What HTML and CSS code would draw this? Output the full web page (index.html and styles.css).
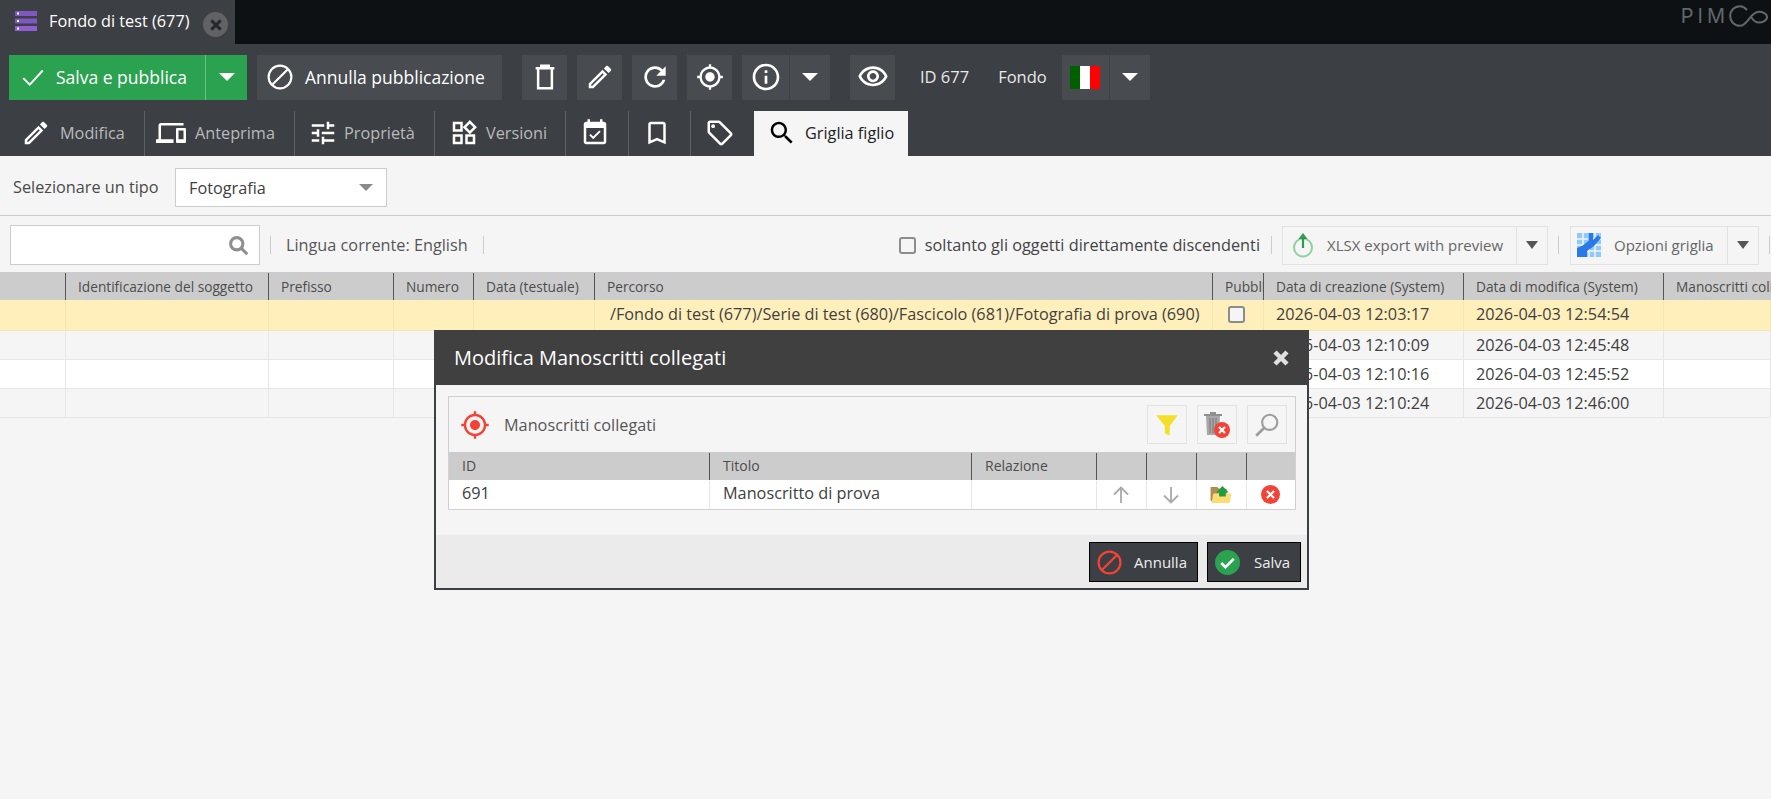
FILE: index.html
```html
<!DOCTYPE html>
<html lang="it">
<head>
<meta charset="utf-8">
<title>Fondo di test (677)</title>
<link rel="stylesheet" href="styles.css">
</head>
<body>
<svg class="sprite" xmlns="http://www.w3.org/2000/svg">
  <symbol id="i-edit" viewBox="0 0 24 24"><path d="M3 17.25V21h3.75L17.81 9.94l-3.75-3.75L3 17.25zM5.92 19H5v-.92l9.06-9.06.92.92L5.92 19zM20.71 5.63l-2.34-2.34c-.2-.2-.45-.29-.71-.29s-.51.1-.7.29l-1.83 1.83 3.75 3.75 1.83-1.83c.39-.39.39-1.02 0-1.41z"/></symbol>
  <symbol id="i-refresh" viewBox="0 0 24 24"><path d="M17.65 6.35C16.2 4.9 14.21 4 12 4c-4.42 0-7.99 3.58-7.99 8s3.57 8 7.99 8c3.73 0 6.84-2.55 7.73-6h-2.08c-.82 2.33-3.04 4-5.65 4-3.31 0-6-2.69-6-6s2.69-6 6-6c1.66 0 3.14.69 4.22 1.78L13 11h7V4l-2.35 2.35z"/></symbol>
  <symbol id="i-target" viewBox="0 0 24 24"><path d="M12 8c-2.21 0-4 1.79-4 4s1.79 4 4 4 4-1.79 4-4-1.79-4-4-4zm8.94 3c-.46-4.17-3.77-7.48-7.94-7.94V1h-2v2.06C6.83 3.52 3.52 6.83 3.06 11H1v2h2.06c.46 4.17 3.77 7.48 7.94 7.94V23h2v-2.06c4.17-.46 7.48-3.77 7.94-7.94H23v-2h-2.06zM12 19c-3.87 0-7-3.13-7-7s3.13-7 7-7 7 3.13 7 7-3.13 7-7 7z"/></symbol>
  <symbol id="i-info" viewBox="0 0 24 24"><path d="M11 7h2v2h-2zm0 4h2v6h-2zm1-9C6.48 2 2 6.48 2 12s4.48 10 10 10 10-4.48 10-10S17.52 2 12 2zm0 18c-4.41 0-8-3.59-8-8s3.59-8 8-8 8 3.59 8 8-3.59 8-8 8z"/></symbol>
  <symbol id="i-eye" viewBox="0 0 24 24"><path d="M12 6c3.79 0 7.17 2.13 8.82 5.5C19.17 14.87 15.79 17 12 17s-7.17-2.13-8.82-5.5C4.83 8.13 8.21 6 12 6m0-2C7 4 2.73 7.11 1 11.5 2.73 15.89 7 19 12 19s9.27-3.11 11-7.5C21.27 7.11 17 4 12 4zm0 5c1.38 0 2.5 1.12 2.5 2.5S13.38 14 12 14s-2.5-1.12-2.5-2.5S10.62 9 12 9m0-2c-2.48 0-4.5 2.02-4.5 4.5S9.52 16 12 16s4.5-2.02 4.5-4.5S14.48 7 12 7z"/></symbol>
  <symbol id="i-devices" viewBox="0 0 24 24"><path d="M4 6h18V4H4c-1.1 0-2 .9-2 2v11H0v3h14v-3H4V6zm19 2h-6c-.55 0-1 .45-1 1v10c0 .55.45 1 1 1h6c.55 0 1-.45 1-1V9c0-.55-.45-1-1-1zm-1 9h-4v-7h4v7z"/></symbol>
  <symbol id="i-tune" viewBox="0 0 24 24"><path d="M3 17v2h6v-2H3zM3 5v2h10V5H3zm10 16v-2h8v-2h-8v-2h-2v6h2zM7 9v2H3v2h4v2h2V9H7zm14 4v-2H11v2h10zm-6-4h2V7h4V5h-4V3h-2v6z"/></symbol>
  <symbol id="i-widgets" viewBox="0 0 24 24"><path d="M16.66 4.52l2.83 2.83-2.83 2.83-2.83-2.83 2.83-2.83M9 5v4H5V5h4m10 10v4h-4v-4h4M9 15v4H5v-4h4m7.66-13.31L11 7.34 16.66 13l5.66-5.66-5.66-5.65zM11 3H3v8h8V3zm10 10h-8v8h8v-8zm-10 0H3v8h8v-8z"/></symbol>
  <symbol id="i-event" viewBox="0 0 24 24"><path d="M16.53 11.06L15.47 10l-4.88 4.88-2.12-2.12-1.06 1.06L10.59 17l5.94-5.94zM19 3h-1V1h-2v2H8V1H6v2H5c-1.11 0-1.99.9-1.99 2L3 19c0 1.1.89 2 2 2h14c1.1 0 2-.9 2-2V5c0-1.1-.9-2-2-2zm0 16H5V8h14v11z"/></symbol>
  <symbol id="i-bookmark" viewBox="0 0 24 24"><path d="M17 3H7c-1.1 0-1.99.9-1.99 2L5 21l7-3 7 3V5c0-1.1-.9-2-2-2zm0 15l-5-2.18L7 18V5h10v13z"/></symbol>
  <symbol id="i-tag" viewBox="0 0 24 24"><path d="M21.41 11.58l-9-9C12.05 2.22 11.55 2 11 2H4c-1.1 0-2 .9-2 2v7c0 .55.22 1.05.59 1.42l9 9c.36.36.86.58 1.41.58s1.05-.22 1.41-.59l7-7c.37-.36.59-.86.59-1.41s-.23-1.06-.59-1.42zM13 20.01L4 11V4h7v-.01l9 9-7 7.02z"/><circle cx="6.5" cy="6.5" r="1.5"/></symbol>
  <symbol id="i-search" viewBox="0 0 24 24"><path d="M15.5 14h-.79l-.28-.27C15.41 12.59 16 11.11 16 9.5 16 5.91 13.09 3 9.5 3S3 5.91 3 9.5 5.91 16 9.5 16c1.61 0 3.09-.59 4.23-1.57l.27.28v.79l5 4.99L20.49 19l-4.99-5zm-6 0C7.01 14 5 11.99 5 9.5S7.01 5 9.5 5 14 7.01 14 9.5 11.99 14 9.5 14z"/></symbol>
  <symbol id="i-trash" viewBox="0 0 24 24"><path d="M4.500 5h15M9 5V3h6v2M6.500 5v16h11V5" fill="none" stroke="currentColor" stroke-width="2"/></symbol>
  <symbol id="i-ban" viewBox="0 0 24 24"><circle cx="12" cy="12" r="10.5" fill="none" stroke="currentColor" stroke-width="2"/><path d="M5 19L19 5" fill="none" stroke="currentColor" stroke-width="2"/></symbol>
</svg>

<header class="topbar">
  <div class="doc-tab">
    <svg class="doc-icon" viewBox="0 0 22 20"><rect x="0" y="0" width="22" height="5" fill="#7e57c2"/><rect x="0" y="7.5" width="22" height="5" fill="#7e57c2"/><rect x="0" y="15" width="22" height="5" fill="#8e5fcf"/><rect x="2" y="1.5" width="2" height="2" fill="#fff"/><rect x="2" y="9" width="2" height="2" fill="#fff"/><rect x="2" y="16.5" width="2" height="2" fill="#fff"/></svg>
    <span class="doc-title">Fondo di test (677)</span>
    <span class="doc-close"><svg viewBox="0 0 12 12" class="doc-close-x"><path d="M2 2l8 8M10 2l-8 8"/></svg></span>
  </div>
  <div class="brand"><span class="brand-text">PIM</span><svg class="brand-mark" viewBox="0 0 40 22"><path d="M18 5C16 2.700 13.500 1.200 11 1.200 5.500 1.200 1.200 5.500 1.200 11s4.300 9.800 9.800 9.800c8 0 10-14 19-14 3.500 0 8 1.500 8 5.200s-4.500 5.500-8 5.500c-4 0-6-2.500-7.500-5"/></svg></div>
</header>

<nav class="toolbar">
  <div class="split save">
    <button class="btn btn-green btn-save"><svg class="ico-check" viewBox="0 0 24 24"><path d="M3 13l6 6L21 6"/></svg><span>Salva e pubblica</span></button>
    <button class="btn btn-green btn-save-caret"><span class="caret caret-white"></span></button>
  </div>
  <button class="btn btn-text"><svg class="ico26"><use href="#i-ban"/></svg><span>Annulla pubblicazione</span></button>
  <button class="btn btn-ico group-start"><svg class="ico30"><use href="#i-trash"/></svg></button>
  <button class="btn btn-ico"><svg class="ico30"><use href="#i-edit"/></svg></button>
  <button class="btn btn-ico"><svg class="ico32"><use href="#i-refresh"/></svg></button>
  <button class="btn btn-ico"><svg class="ico28"><use href="#i-target"/></svg></button>
  <div class="split split-1">
    <button class="btn btn-ico btn-info"><svg class="ico32"><use href="#i-info"/></svg></button>
    <button class="btn btn-caret"><span class="caret caret-white"></span></button>
  </div>
  <button class="btn btn-ico group-start"><svg class="ico32"><use href="#i-eye"/></svg></button>
  <span class="tb-label tb-id">ID 677</span>
  <span class="tb-label tb-type">Fondo</span>
  <div class="split split-1 lang">
    <button class="btn btn-ico btn-info"><span class="flag"><i class="flag-g"></i><i class="flag-w"></i><i class="flag-r"></i></span></button>
    <button class="btn btn-caret"><span class="caret caret-white"></span></button>
  </div>
</nav>

<nav class="tabs">
  <div class="tab tab-modifica"><svg class="ico30"><use href="#i-edit"/></svg><span>Modifica</span></div>
  <div class="tab tab-anteprima"><svg class="ico30"><use href="#i-devices"/></svg><span>Anteprima</span></div>
  <div class="tab tab-proprieta"><svg class="ico30"><use href="#i-tune"/></svg><span>Proprietà</span></div>
  <div class="tab tab-versioni"><svg class="ico30"><use href="#i-widgets"/></svg><span>Versioni</span></div>
  <div class="tab tab-ico"><svg class="ico30"><use href="#i-event"/></svg></div>
  <div class="tab tab-ico tab-book"><svg class="ico30"><use href="#i-bookmark"/></svg></div>
  <div class="tab tab-ico tab-last"><svg class="ico30"><use href="#i-tag"/></svg></div>
  <div class="tab tab-active"><svg class="ico30"><use href="#i-search"/></svg><span>Griglia figlio</span></div>
</nav>

<main class="content">
  <div class="type-row">
    <label class="type-label">Selezionare un tipo</label>
    <div class="select"><span>Fotografia</span><span class="caret caret-gray"></span></div>
  </div>
  <div class="filter-row">
    <div class="search"><svg class="search-ico" viewBox="0 0 24 24"><circle cx="10" cy="10" r="7" /><path d="M15 15l7 7"/></svg></div>
    <span class="vsep"></span>
    <span class="lang-text">Lingua corrente: English</span>
    <span class="vsep"></span>
    <span class="spacer"></span>
    <span class="checkbox"></span>
    <span class="check-text">soltanto gli oggetti direttamente discendenti</span>
    <span class="vsep"></span>
    <div class="tool-split tool-xlsx">
      <div class="tool-main">
        <svg class="tool-ico" viewBox="0 0 20 26"><circle cx="10" cy="15.500" r="9" fill="none" stroke="#8fd19e" stroke-width="2"/><path d="M10 16V3" stroke="#2a9d55" stroke-width="2.200" fill="none"/><path d="M5.500 7L10 1l4.500 6z" fill="#2a9d55"/></svg>
        <span>XLSX export with preview</span>
      </div>
      <div class="tool-caret"><span class="caret caret-dark"></span></div>
    </div>
    <span class="vsep"></span>
    <div class="tool-split tool-grid">
      <div class="tool-main">
        <svg class="tool-ico-grid" viewBox="0 0 24 24"><rect width="24" height="24" fill="#90caf9"/><path d="M0 6h24M0 12h24M0 18h24M6 0v24M12 0v24M18 0v24" stroke="#f5f5f5" stroke-width="1.500"/><path d="M0 24V15l5-2 6.500-5V0H16v7l5-5 3 3-7 8-7 5v6z" fill="#2979e8"/></svg>
        <span>Opzioni griglia</span>
      </div>
      <div class="tool-caret"><span class="caret caret-dark"></span></div>
    </div>
    <span class="vsep vsep-last"></span>
  </div>

  <section class="grid">
    <div class="grid-head grid-cols">
      <div class="hc"></div>
      <div class="hc">Identificazione del soggetto</div>
      <div class="hc">Prefisso</div>
      <div class="hc">Numero</div>
      <div class="hc">Data (testuale)</div>
      <div class="hc">Percorso</div>
      <div class="hc">Pubblicato</div>
      <div class="hc">Data di creazione (System)</div>
      <div class="hc">Data di modifica (System)</div>
      <div class="hc hc-last">Manoscritti collegati</div>
    </div>
    <div class="row row-sel grid-cols">
      <div class="c"></div><div class="c"></div><div class="c"></div><div class="c"></div><div class="c"></div>
      <div class="c c-path">/Fondo di test (677)/Serie di test (680)/Fascicolo (681)/Fotografia di prova (690)</div>
      <div class="c c-check"><span class="checkbox"></span></div>
      <div class="c">2026-04-03 12:03:17</div><div class="c">2026-04-03 12:54:54</div><div class="c"></div>
    </div>
    <div class="row row-alt grid-cols">
      <div class="c"></div><div class="c"></div><div class="c"></div><div class="c"></div><div class="c"></div><div class="c"></div><div class="c"></div>
      <div class="c">2026-04-03 12:10:09</div><div class="c">2026-04-03 12:45:48</div><div class="c"></div>
    </div>
    <div class="row row-white grid-cols">
      <div class="c"></div><div class="c"></div><div class="c"></div><div class="c"></div><div class="c"></div><div class="c"></div><div class="c"></div>
      <div class="c">2026-04-03 12:10:16</div><div class="c">2026-04-03 12:45:52</div><div class="c"></div>
    </div>
    <div class="row row-alt grid-cols">
      <div class="c"></div><div class="c"></div><div class="c"></div><div class="c"></div><div class="c"></div><div class="c"></div><div class="c"></div>
      <div class="c">2026-04-03 12:10:24</div><div class="c">2026-04-03 12:46:00</div><div class="c"></div>
    </div>
  </section>
</main>

<div class="modal">
  <div class="modal-head">
    <span>Modifica Manoscritti collegati</span>
    <svg class="modal-x" viewBox="0 0 12 12"><path d="M2 2l8 8M10 2l-8 8"/></svg>
  </div>
  <div class="modal-body">
    <div class="panel">
      <div class="panel-bar">
        <svg class="panel-target"><use href="#i-target"/></svg>
        <span class="panel-title">Manoscritti collegati</span>
        <span class="spacer"></span>
        <button class="pbtn"><svg viewBox="0 0 24 24" class="pico"><path d="M2 3h20l-7.500 10v9l-4.500-2.500V13z" fill="#f4e02b"/></svg></button>
        <button class="pbtn"><svg viewBox="0 0 26 27" class="pico-trash"><path d="M0 3h18v2H0zM6 3V1h6v2z" fill="#8f8f8f"/><path d="M2 5h14l-1 19H3z" fill="#a8a8a8"/><path d="M6 7v15M9 7v15M12 7v15" stroke="#777" stroke-width="1"/><circle cx="18" cy="19" r="8" fill="#f44336"/><path d="M15 16l6 6M21 16l-6 6" stroke="#fff" stroke-width="2.200"/></svg></button>
        <button class="pbtn"><svg viewBox="0 0 24 24" class="pico"><circle cx="14.500" cy="9.500" r="7" fill="none" stroke="#9e9e9e" stroke-width="2"/><path d="M9.500 14.500L2 22" stroke="#9e9e9e" stroke-width="2.600"/></svg></button>
      </div>
      <div class="pgrid-head pgrid-cols">
        <div class="phc">ID</div><div class="phc">Titolo</div><div class="phc">Relazione</div>
        <div class="phc"></div><div class="phc"></div><div class="phc"></div><div class="phc phc-last"></div>
      </div>
      <div class="prow pgrid-cols">
        <div class="pc">691</div>
        <div class="pc">Manoscritto di prova</div>
        <div class="pc"></div>
        <div class="pc pc-i"><svg viewBox="0 0 20 20" class="arrow"><path d="M10 18V3M3 9.500L10 2.500l7 7"/></svg></div>
        <div class="pc pc-i"><svg viewBox="0 0 20 20" class="arrow"><path d="M10 2v15M3 10.500l7 7 7-7"/></svg></div>
        <div class="pc pc-i"><svg viewBox="0 0 24 20" class="folder"><path d="M1 2h7l2 2h8v14H3L1 16z" fill="#b08d57"/><path d="M4 9h19l-2 10H2z" fill="#ffdc72"/><path d="M10 12V8H7l6.500-7L20 8h-3v4z" fill="#1b9e3e"/></svg></div>
        <div class="pc pc-i pc-last"><svg viewBox="0 0 20 20" class="del"><circle cx="10" cy="10" r="10" fill="#f44336"/><path d="M6.300 6.300l7.400 7.400M13.700 6.300l-7.400 7.400" stroke="#fff" stroke-width="2.400"/></svg></div>
      </div>
    </div>
  </div>
  <div class="modal-foot">
    <button class="fbtn fbtn-cancel"><svg viewBox="0 0 24 24" class="fico"><circle cx="12" cy="12" r="10.500" fill="none" stroke="#f44336" stroke-width="2.200"/><path d="M5 19L19 5" stroke="#f44336" stroke-width="2.200"/></svg><span>Annulla</span></button>
    <button class="fbtn fbtn-save"><svg viewBox="0 0 24 24" class="fico"><circle cx="12" cy="12" r="12" fill="#2ba24f"/><path d="M6 12.500l4 4 8-8" fill="none" stroke="#fff" stroke-width="2.600"/></svg><span>Salva</span></button>
  </div>
</div>
</body>
</html>
```

FILE: styles.css
```css
* { box-sizing: border-box; }
html, body { margin: 0; height: 100%; }
body {
  width: 1771px;
  height: 799px;
  overflow: hidden;
  position: relative;
  background: #f5f5f5;
  font-family: "Open Sans", "Liberation Sans", sans-serif;
  color: #404040;
}
.sprite { display: none; }
button { font-family: inherit; border: 0; padding: 0; margin: 0; }
svg { display: block; flex: none; fill: currentColor; }
.spacer { flex: 1; }

/* top bar */
.topbar {
  height: 44px;
  background: #0d1114;
  display: flex;
  justify-content: space-between;
}
.doc-tab {
  width: 235px;
  background: #3c3f43;
  display: flex;
  align-items: center;
  padding-left: 15px;
  color: #fff;
}
.doc-icon { width: 22px; height: 20px; margin-top: -3px; }
.doc-title { margin-left: 12px; font-size: 16.25px; margin-top: -3px; white-space: nowrap; }
.doc-close {
  width: 25px;
  height: 25px;
  border-radius: 50%;
  background: #606265;
  margin: 5px 0 0 14px;
  display: flex;
  align-items: center;
  justify-content: center;
}
.doc-close-x { width: 14px; height: 14px; fill: none; stroke: #26282b; stroke-width: 2.6; }
.brand { display: flex; align-items: flex-start; padding: 5px 2px 0 0; color: #63676a; }
.brand-text { font-family: "Inter", sans-serif; font-weight: 400; font-size: 20px; line-height: 20px; letter-spacing: 4px; margin-top: 1px; }
.brand-mark { width: 40px; height: 22px; fill: none; stroke: #63676a; stroke-width: 2; overflow: visible; }

/* toolbar */
.toolbar {
  height: 67px;
  background: #3c3f43;
  padding: 11px 0 0 9px;
  display: flex;
  align-items: flex-start;
  gap: 10px;
}
.btn {
  height: 45px;
  display: flex;
  align-items: center;
  justify-content: center;
  background: #484b4f;
  color: #fff;
  font-size: 17.500px;
  padding-bottom: 1px;
}
.split { display: flex; }
.split-1 { gap: 1px; }
.btn-green { background: #2ba24f; }
.btn-save { width: 197px; justify-content: flex-start; padding-left: 11px; border-right: 1px solid #6fc08a; }
.btn-save-caret { width: 41px; }
.ico-check { width: 26px; height: 26px; fill: none; stroke: #fff; stroke-width: 1.8; margin-right: 10px; }
.btn-text { width: 245px; justify-content: flex-start; padding-left: 10px; gap: 12px; }
.ico26 { width: 26px; height: 26px; }
.ico28 { width: 28px; height: 28px; }
.ico30 { width: 30px; height: 30px; }
.ico32 { width: 32px; height: 32px; }
.btn-ico { width: 45px; }
.btn-info { width: 47px; }
.btn-caret { width: 40px; }
.group-start { margin-left: 10px; }
.tb-label { color: #e8e8e8; font-size: 16.500px; line-height: 44px; }
.tb-id { margin-left: 15px; }
.tb-type { margin-left: 19px; }
.lang { margin-left: 5px; }
.caret { display: block; width: 0; height: 0; border-style: solid; border-color: transparent; border-width: 8px 8.500px 0; }
.caret-white { border-top-color: #fff; }
.caret-gray { border-width: 7px 7px 0; border-top-color: #8a8a8a; }
.caret-dark { border-width: 8px 6.500px 0; border-top-color: #555; }
.flag { display: flex; width: 30px; height: 23px; }
.flag i { flex: 1; }
.flag-g { background: #006000; }
.flag-w { background: #fff; }
.flag-r { background: #f00; }

/* tabs */
.tabs {
  height: 45px;
  background: #3c3f43;
  display: flex;
  color: #fff;
  font-size: 16.250px;
}
.tab {
  height: 45px;
  display: flex;
  align-items: center;
  border-right: 1px solid #5d6064;
  padding-bottom: 1px;
  white-space: nowrap;
}
.tab span { color: #b8babc; }
.tab-modifica { width: 145px; padding-left: 21px; gap: 9px; }
.tab-anteprima { width: 150px; padding-left: 11px; gap: 9px; }
.tab-proprieta { width: 140px; padding-left: 13px; gap: 6px; }
.tab-versioni { width: 131px; padding-left: 14px; gap: 7px; }
.tab-ico { width: 63px; justify-content: center; padding-right: 5px; }
.tab-book { width: 62px; padding-right: 6px; }
.tab-last { width: 63px; border-right: 0; padding-right: 6px; }
.tab-active {
  width: 154px;
  background: #f5f5f5;
  color: #000;
  border-right: 0;
  padding-left: 13px;
  gap: 8px;
}
.tab-active span { color: #222; }

/* type row */
.type-row {
  height: 60px;
  padding: 12px 0 0 13px;
  display: flex;
  align-items: flex-start;
  border-bottom: 1px solid #ccc;
}
.type-label { font-size: 16.250px; line-height: 38px; width: 162px; color: #4a4a4a; white-space: nowrap; }
.select {
  width: 212px;
  height: 39px;
  background: #fff;
  border: 1px solid #ccc;
  display: flex;
  align-items: center;
  justify-content: space-between;
  padding: 0 13px;
  font-size: 16.250px;
}
.filter-row {
  height: 56px;
  padding: 9px 1px 7px 10px;
  display: flex;
  align-items: center;
  color: #555;
  font-size: 16.250px;
  white-space: nowrap;
}
.search {
  width: 250px;
  height: 40px;
  background: #fff;
  border: 1px solid #ccc;
  display: flex;
  align-items: center;
  justify-content: flex-end;
  padding-right: 10px;
}
.search-ico { width: 21px; height: 21px; fill: none; stroke: #8f8f8f; stroke-width: 3.500; }
.vsep { width: 1px; height: 18px; background: #ccc; margin-left: 10px; }
.vsep-last { margin-left: 10px; }
.lang-text { margin-left: 15px; }
.lang-text + .vsep { margin-left: 15px; }
.checkbox {
  width: 17px;
  height: 17px;
  display: block;
  border: 2px solid #8c8c8c;
  border-radius: 3px;
  background: #f5f5f5;
}
.check-text { margin-left: 9px; color: #444; }
.check-text + .vsep { margin-left: 11px; }
.tool-split {
  height: 39px;
  display: flex;
  border: 1px solid #e2e2e2;
  margin-left: 10px;
}
.tool-grid { margin-left: 11px; }
.tool-main { display: flex; align-items: center; border-right: 1px solid #e2e2e2; font-size: 15px; color: #666; }
.tool-xlsx .tool-main { width: 234px; padding-left: 10px; gap: 14px; }
.tool-grid .tool-main { width: 157px; padding-left: 6px; gap: 13px; }
.tool-ico { width: 20px; height: 26px; }
.tool-ico-grid { width: 24px; height: 24px; }
.tool-caret { width: 30px; display: flex; align-items: center; justify-content: center; }
.tool-xlsx + .vsep { margin-left: 10px; }

/* grid */
.grid-cols {
  display: grid;
  grid-template-columns: 66px 203px 125px 80px 121px 618px 51px 200px 200px 107px;
}
.grid-head { height: 28px; background: #ccc; font-size: 13.700px; color: #4c4c4c; }
.hc {
  padding: 0 12px;
  line-height: 27px;
  white-space: nowrap;
  overflow: hidden;
  border-right: 1px solid #555;
  margin-top: 1px;
}
.hc-last { border-right: 0; }
.row { height: 29px; font-size: 16.250px; border-bottom: 1px solid #e6e6e6; }
.row-sel { height: 31px; background: #ffefbb; border-bottom-color: #f5e6b0; }
.row-alt { background: #f5f5f5; }
.row-white { background: #fff; }
.c {
  border-right: 1px solid #e6e6e6;
  padding: 0 12px;
  line-height: 28px;
  white-space: nowrap;
  overflow: hidden;
  color: #3f3f3f;
}
.row-sel .c { border-right-color: #f5e6b0; line-height: 29px; }
.c-path { padding-left: 15px; }
.c-check { padding: 6px 0 0 15px; }

/* modal */
.modal {
  position: absolute;
  left: 434px;
  top: 330px;
  width: 875px;
  height: 260px;
  background: #f5f5f5;
  border: 2px solid #3c3f43;
  border-top: 0;
  display: flex;
  flex-direction: column;
}
.modal-head {
  height: 55px;
  margin: 0 -2px;
  background: #404040;
  color: #fff;
  font-size: 20px;
  display: flex;
  align-items: center;
  justify-content: space-between;
  padding: 0 19px 0 20px;
}
.modal-x { width: 18px; height: 18px; fill: none; stroke: #e0e0e0; stroke-width: 3; }
.modal-body { flex: 1; padding: 11px 11px 0 12px; }
.panel { height: 114px; border: 1px solid #d0d0d0; }
.panel-bar { height: 55px; display: flex; align-items: center; padding: 0 8px 0 11px; }
.panel-target { width: 30px; height: 30px; color: #f44336; }
.panel-title { margin-left: 14px; font-size: 16.250px; color: #555; }
.pbtn {
  width: 40px;
  height: 39px;
  background: #f5f5f5;
  border: 1px solid #e2e2e2;
  margin-left: 10px;
  display: flex;
  align-items: center;
  justify-content: center;
}
.pico { width: 26px; height: 26px; }
.pico-trash { width: 26px; height: 27px; }
.pgrid-cols { display: grid; grid-template-columns: 261px 262px 125px 50px 50px 50px 49px; }
.pgrid-head { height: 28px; background: #ccc; font-size: 14px; color: #4c4c4c; }
.phc { padding: 0 13px; line-height: 26px; border-right: 1px solid #555; margin-top: 1px; }
.phc-last { border-right: 0; }
.prow { height: 29px; background: #fff; font-size: 16.250px; color: #404040; }
.pc { padding: 0 13px; line-height: 25px; border-right: 1px solid #e6e6e6; margin-top: 1px; }
.pc-last { border-right: 0; }
.pc-i { padding: 0 2px 1px 0; display: flex; align-items: center; justify-content: center; }
.arrow { width: 20px; height: 20px; fill: none; stroke: #a9a9a9; stroke-width: 1.800; }
.folder { width: 24px; height: 19px; }
.del { width: 19px; height: 19px; }
.modal-foot {
  height: 53px;
  background: #ebebeb;
  display: flex;
  justify-content: flex-end;
  gap: 9px;
  padding: 7px 6px 0 0;
}
.fbtn {
  height: 40px;
  background: #3c3f43;
  border: 1px solid #000;
  color: #eee;
  font-size: 15px;
  display: flex;
  align-items: center;
  padding-left: 7px;
}
.fico { width: 25px; height: 25px; }
.fbtn-cancel { width: 109px; gap: 12px; }
.fbtn-save { width: 94px; gap: 14px; }
```
